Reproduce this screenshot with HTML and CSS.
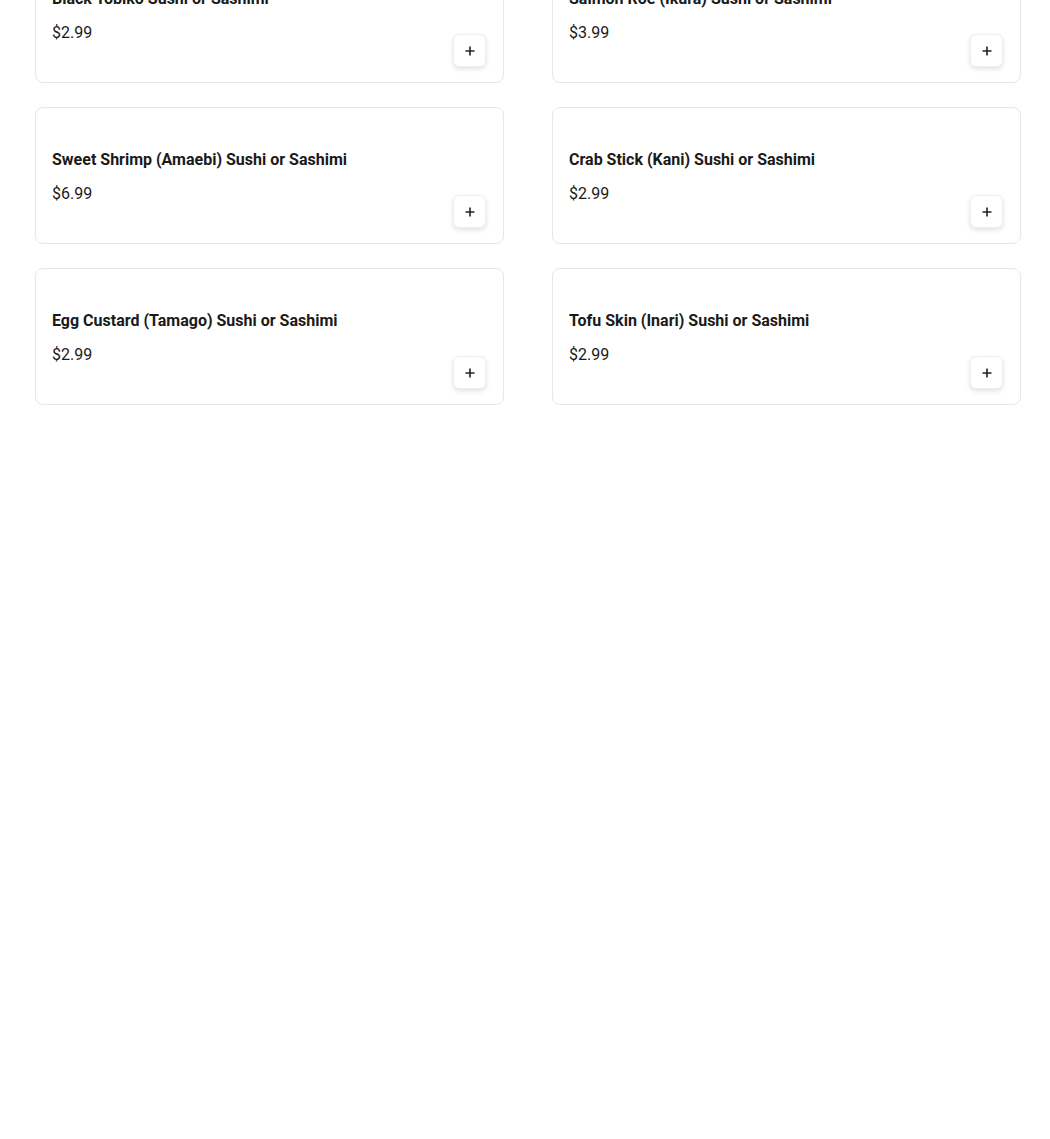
FILE: index.html
```html
<!DOCTYPE html>
<html>
<head>
<meta charset="utf-8">
<link rel="stylesheet" href="styles.css">
</head>
<body>
<div class="grid">
  <div class="card"><div class="info"><div class="title">Black Tobiko Sushi or Sashimi</div><div class="price">$2.99</div></div><button class="add"><svg width="12" height="12" viewBox="0 0 12 12"><path d="M6 1.5v9M1.5 6h9" stroke="#222" stroke-width="1.6"/></svg></button></div>
  <div class="card"><div class="info"><div class="title">Salmon Roe (Ikura) Sushi or Sashimi</div><div class="price">$3.99</div></div><button class="add"><svg width="12" height="12" viewBox="0 0 12 12"><path d="M6 1.5v9M1.5 6h9" stroke="#222" stroke-width="1.6"/></svg></button></div>
  <div class="card"><div class="info"><div class="title">Sweet Shrimp (Amaebi) Sushi or Sashimi</div><div class="price">$6.99</div></div><button class="add"><svg width="12" height="12" viewBox="0 0 12 12"><path d="M6 1.5v9M1.5 6h9" stroke="#222" stroke-width="1.6"/></svg></button></div>
  <div class="card"><div class="info"><div class="title">Crab Stick (Kani) Sushi or Sashimi</div><div class="price">$2.99</div></div><button class="add"><svg width="12" height="12" viewBox="0 0 12 12"><path d="M6 1.5v9M1.5 6h9" stroke="#222" stroke-width="1.6"/></svg></button></div>
  <div class="card"><div class="info"><div class="title">Egg Custard (Tamago) Sushi or Sashimi</div><div class="price">$2.99</div></div><button class="add"><svg width="12" height="12" viewBox="0 0 12 12"><path d="M6 1.5v9M1.5 6h9" stroke="#222" stroke-width="1.6"/></svg></button></div>
  <div class="card"><div class="info"><div class="title">Tofu Skin (Inari) Sushi or Sashimi</div><div class="price">$2.99</div></div><button class="add"><svg width="12" height="12" viewBox="0 0 12 12"><path d="M6 1.5v9M1.5 6h9" stroke="#222" stroke-width="1.6"/></svg></button></div>
</div>
</body>
</html>
```
FILE: styles.css
```css
html, body {
  margin: 0;
  padding: 0;
  background: #fff;
  font-family: Roboto, "Liberation Sans", sans-serif;
  color: #1a1a1a;
}
.grid {
  display: grid;
  grid-template-columns: 469px 469px;
  column-gap: 48px;
  row-gap: 24px;
  padding-left: 35px;
  margin-top: -54px;
}
.card {
  box-sizing: border-box;
  height: 137px;
  border: 1px solid #e6e6e6;
  border-radius: 8px;
  padding: 16px 17px 15px 16px;
  display: flex;
  justify-content: space-between;
  align-items: flex-end;
}
.info {
  padding-top: 26px;
  padding-bottom: 24px;
}
.title {
  font-size: 16px;
  font-weight: 700;
  line-height: 20px;
  color: #1a1a1a;
}
.price {
  margin-top: 14px;
  font-size: 16px;
  line-height: 20px;
  color: #1a1a1a;
}
.add {
  width: 33px;
  height: 33px;
  padding: 0;
  border: 1px solid #efefef;
  border-radius: 6px;
  background: #fff;
  box-shadow: 0 2px 5px rgba(0,0,0,0.12);
  display: flex;
  align-items: center;
  justify-content: center;
}
```
